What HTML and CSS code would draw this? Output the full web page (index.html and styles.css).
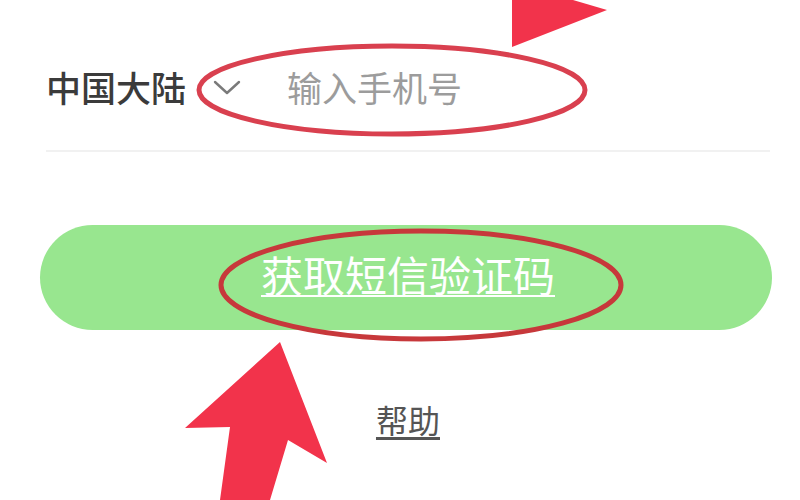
FILE: index.html
```html
<!DOCTYPE html>
<html lang="zh-CN">
<head>
<meta charset="utf-8">
<title>登录</title>
<link rel="stylesheet" href="styles.css">
</head>
<body>
<div class="page">
  <div class="phone-row">
    <span class="region">中国大陆</span>
    <svg class="chevron" width="28" height="16" viewBox="0 0 28 16"><polyline points="2,3 14,14 26,3" fill="none" stroke="#7a7a7a" stroke-width="2.4" stroke-linecap="round" stroke-linejoin="round"/></svg>
    <span class="placeholder">输入手机号</span>
  </div>
  <div class="btn"><span class="btn-text">获取短信验证码</span></div>
  <div class="help"><span class="help-text">帮助</span></div>

  <svg class="marks" width="800" height="500" viewBox="0 0 800 500">
    <polygon points="512,0 573,0 607,10 512,47" fill="#f2334b"/>
    <ellipse cx="392" cy="90" rx="193" ry="44" fill="none" stroke="#d9404f" stroke-width="5"/>
    <ellipse cx="421" cy="285" rx="200" ry="54" fill="none" stroke="#c7383b" stroke-width="5"/>
    <polygon points="280,342 327,463 288,440 270,500 220,500 230,427 185,428" fill="#f2334b"/>
  </svg>
</div>
</body>
</html>
```

FILE: styles.css
```css
html, body {
  margin: 0;
  padding: 0;
  background: #ffffff;
}
body {
  width: 800px;
  height: 500px;
  overflow: hidden;
  font-family: "Noto Sans CJK SC", "Noto Sans", sans-serif;
}
.page {
  position: relative;
  width: 800px;
  height: 500px;
  padding: 0 28px 0 40px;
  box-sizing: border-box;
}
.phone-row {
  display: flex;
  align-items: center;
  height: 80px;
  margin: 0 2px 0 6px;
  padding-top: 46px;
  padding-bottom: 24px;
  border-bottom: 2px solid #f1f1f1;
}
.region {
  font-size: 35px;
  font-weight: 500;
  color: #3b3b3b;
  line-height: 1;
}
.chevron {
  margin-left: 27px;
  margin-top: 2px;
}
.placeholder {
  margin-left: 46px;
  font-size: 35px;
  color: #9c9c9c;
  line-height: 1;
}
.btn {
  margin-top: 73px;
  height: 105px;
  border-radius: 53px;
  background: #98e68f;
  display: flex;
  align-items: center;
  justify-content: center;
}
.btn-text {
  font-size: 42px;
  color: #ffffff;
  text-decoration: underline;
  text-decoration-thickness: 2px;
  text-underline-offset: 3px;
  line-height: 1;
  margin-left: 4px;
  margin-bottom: 8px;
}
.help {
  margin-top: 73px;
  display: flex;
  justify-content: center;
}
.help-text {
  font-size: 32px;
  color: #555555;
  text-decoration: underline;
  text-underline-offset: 4px;
  line-height: 1;
  margin-left: 4px;
}
.marks {
  position: absolute;
  left: 0;
  top: 0;
  pointer-events: none;
}
```
